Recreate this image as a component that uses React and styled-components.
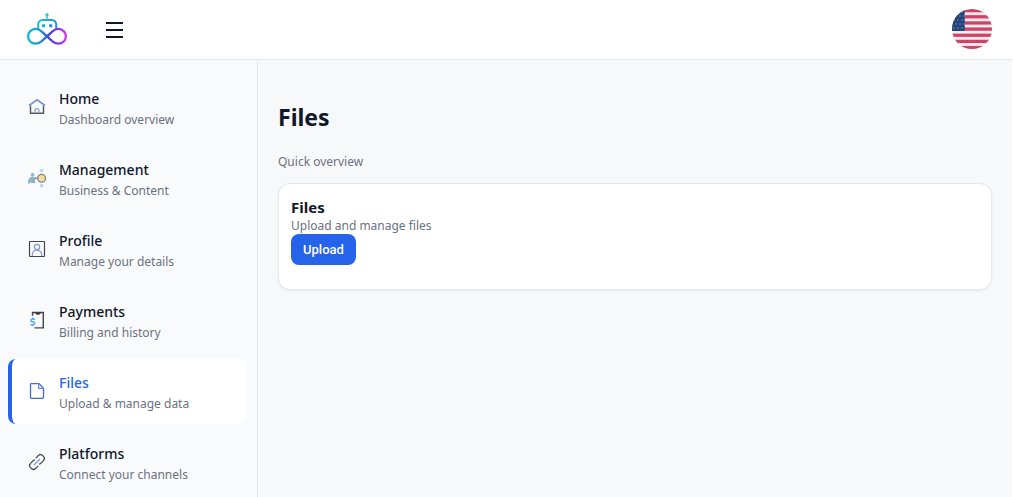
import React from "react";
import styled, { createGlobalStyle, css } from "styled-components";

const GlobalStyle = createGlobalStyle`
  *, *::before, *::after { box-sizing: border-box; }
  body {
    margin: 0;
    padding-right: 1px;
    background: #ffffff;
    color: #0f172a;
    font-family: "Segoe UI", "Noto Sans", sans-serif;
  }
  h1, h2, p { margin: 0; }
`;

const Page = styled.div`
  display: flex;
  flex-direction: column;
  height: 100vh;
  overflow: hidden;
  background: #f7f8fa;
`;

const Header = styled.header`
  display: flex;
  flex: none;
  align-items: center;
  height: 60px;
  padding: 0 20px 2px 24px;
  background: #ffffff;
  border-bottom: 1px solid #e5e7eb;
`;

const LogoLink = styled.a`
  display: flex;
`;

const MenuButton = styled.button`
  display: flex;
  margin: 4px auto 0 28px;
  padding: 4px;
  border: 0;
  background: transparent;
  color: #0f172a;
`;

const LanguageButton = styled.button`
  display: flex;
  padding: 0;
  border: 0;
  border-radius: 50%;
  background: transparent;
`;

const Body = styled.div`
  display: flex;
  flex: 1;
  min-height: 0;
`;

const Sidebar = styled.nav`
  display: flex;
  flex: none;
  flex-direction: column;
  gap: 6px;
  width: 258px;
  padding: 15px 10px 15px 8px;
  overflow: hidden;
  background: #f9fafc;
  border-right: 1px solid #e5e7eb;
`;

const NavItem = styled.a`
  display: flex;
  flex: none;
  align-items: flex-start;
  gap: 12px;
  padding: 13px 15px 10px;
  border-left: 4px solid transparent;
  border-radius: 8px;
  color: #0f172a;
  text-decoration: none;
  ${({ $active }) =>
    $active &&
    css`
      border-left-color: #2563eb;
      background: #ffffff;
      color: #2563eb;
    `}
`;

const NavIcon = styled.svg`
  flex: none;
  width: 20px;
  height: 20px;
  margin-top: 9px;
  fill: none;
`;

const NavTitle = styled.span`
  display: block;
  font-size: 14px;
  font-weight: 500;
  line-height: 22px;
`;

const Muted = styled.span`
  display: block;
  color: #6b7280;
  font-size: 12px;
  line-height: 20px;
`;

const Main = styled.main`
  flex: 1;
  min-width: 0;
  padding: 40px 20px;
`;

const PageTitle = styled.h1`
  margin-bottom: 18px;
  font-size: 23px;
  font-weight: 700;
  line-height: 34px;
`;

const Card = styled.section`
  display: flex;
  flex-direction: column;
  align-items: flex-start;
  margin-top: 11px;
  padding: 12px 12px 24px;
  background: #ffffff;
  border: 1px solid #e5e7eb;
  border-radius: 12px;
  box-shadow: 0 1px 3px rgba(0, 0, 0, 0.06);
`;

const CardTitle = styled.h2`
  font-size: 15px;
  font-weight: 700;
  line-height: 22px;
`;

const CardText = styled.p`
  color: #6b7280;
  font-size: 12px;
  line-height: 16px;
`;

const UploadButton = styled.button`
  padding: 8px 12px;
  border: 0;
  border-radius: 8px;
  background: #2563eb;
  color: #ffffff;
  font: 500 13px/15px Roboto, sans-serif;
`;

const Logo = () => (
  <svg width="46" height="38" viewBox="0 0 46 38" fill="none" aria-hidden="true">
    <defs>
      <linearGradient id="loop" x1="3" y1="0" x2="43" y2="0" gradientUnits="userSpaceOnUse">
        <stop offset="0" stopColor="#10c0cc" />
        <stop offset="0.35" stopColor="#1595d4" />
        <stop offset="0.55" stopColor="#3f46dc" />
        <stop offset="0.8" stopColor="#9a35e4" />
        <stop offset="1" stopColor="#d43cf0" />
      </linearGradient>
      <linearGradient id="head" x1="13" y1="0" x2="34" y2="0" gradientUnits="userSpaceOnUse">
        <stop offset="0" stopColor="#16c4cc" />
        <stop offset="1" stopColor="#1d8fd6" />
      </linearGradient>
    </defs>
    <path d="M14.200 19v-4.500a4.500 4.500 0 0 1 4.500-4.500h9a4.500 4.500 0 0 1 4.500 4.500V19" stroke="url(#head)" strokeWidth="2" />
    <path d="M23 10V5" stroke="#20c8d0" strokeWidth="1.400" />
    <circle cx="23" cy="4.800" r="1.700" fill="#2ad0d4" />
    <circle cx="19.500" cy="15.800" r="1.800" fill="#13b5cf" />
    <circle cx="26.700" cy="15.800" r="1.800" fill="#1a9ad6" />
    <path d="M23 26.300 17.500 21.300C15.700 19.700 13.800 18.900 11.500 18.900a7.400 7.400 0 0 0 0 14.800c2.300 0 4.200-.8 6-2.400L28.500 21.300C30.300 19.700 32.200 18.900 34.500 18.900a7.400 7.400 0 0 1 0 14.800c-2.300 0-4.200-.8-6-2.400Z" stroke="url(#loop)" strokeWidth="2.300" />
  </svg>
);

const MenuGlyph = () => (
  <svg width="24" height="24" viewBox="0 0 24 24" aria-hidden="true">
    <path d="M4 4h17M4 11h17M4 18h17" stroke="currentColor" strokeWidth="1.800" />
  </svg>
);

const stripes = [0, 1, 2, 3, 4, 5, 6];
const stars = [0, 1, 2, 3, 4];

const Flag = () => (
  <svg width="40" height="40" viewBox="0 0 40 40" aria-hidden="true">
    <defs>
      <clipPath id="disc"><circle cx="20" cy="20" r="20" /></clipPath>
    </defs>
    <g clipPath="url(#disc)">
      <rect width="40" height="40" fill="#f8eaef" />
      {stripes.map((n) => (
        <rect key={n} y={n * 6.15} width="40" height="3.300" fill="#cd4467" />
      ))}
      <rect width="12.700" height="22" fill="#22457c" />
      {stars.map((r) =>
        [0, 1, 2].map((c) => (
          <circle key={`${r}-${c}`} cx={2 + c * 4 + (r % 2) * 2} cy={3 + r * 4} r="0.700" fill="#8ba3c4" />
        ))
      )}
    </g>
  </svg>
);

const HomeIcon = () => (
  <NavIcon viewBox="0 0 20 20" aria-hidden="true">
    <path d="M3.500 8.500v7.800h13V8.500" stroke="#55555c" strokeWidth="1.400" />
    <path d="M2 8.500 10 2.900l8 5.600" stroke="#7b93c9" strokeWidth="1.700" />
    <path d="M8 16v-2.300a2 2 0 0 1 4 0V16" stroke="#8aa2da" strokeWidth="1.300" />
  </NavIcon>
);

const ManagementIcon = () => (
  <NavIcon viewBox="0 0 20 20" aria-hidden="true">
    <circle cx="14.600" cy="2.600" r="1.900" fill="#b9dbf6" />
    <circle cx="14.600" cy="17.600" r="1.900" fill="#b9dbf6" />
    <circle cx="5.600" cy="6.800" r="1.900" fill="#8db3cf" />
    <path d="M1 15.500c0-4 1-6.500 4-6.500h1.500L8 10.500V15H4v-2l-1 2.500Z" fill="#8db3cf" />
    <path d="M7 10.300h4" stroke="#7896ad" strokeWidth="1.600" />
    <circle cx="14.600" cy="10.200" r="3.900" fill="#f5dda0" stroke="#7d8588" strokeWidth="1.300" />
  </NavIcon>
);

const ProfileIcon = () => (
  <NavIcon viewBox="0 0 20 20" aria-hidden="true">
    <rect x="2.500" y="2.500" width="15" height="15" rx="0.500" stroke="#45454b" strokeWidth="1.200" />
    <circle cx="10" cy="8" r="2.700" stroke="#8298d4" strokeWidth="1.200" />
    <path d="M5.300 17v-1.500c0-2.500 2-4.300 4.700-4.300s4.700 1.800 4.700 4.300V17" stroke="#8298d4" strokeWidth="1.200" />
  </NavIcon>
);

const PaymentsIcon = () => (
  <NavIcon viewBox="0 0 20 20" aria-hidden="true">
    <path d="M5.500 5.800V2.500h10.800v15.400H7.500" stroke="#444448" strokeWidth="1.400" />
    <path d="M8.500 2h5v1.500l-1.200 1.300H9.700L8.500 3.500Z" fill="#3d3d42" />
    <path d="M8 9.200H5.300c-2 0-2 2.500 0 2.600l1 .1c2 .2 1.800 2.900-.2 2.900H3.300M5.700 7.600v1.600M5.700 14.800v1.400" stroke="#62aef2" strokeWidth="1.600" />
  </NavIcon>
);

const FilesIcon = () => (
  <NavIcon viewBox="0 0 20 20" aria-hidden="true">
    <path d="M12 2.600H4.300a.8.800 0 0 0-.8.800v13.200c0 .5.300.8.800.800h11.400c.5 0 .8-.3.800-.8V7.200L12 2.600Z" stroke="#4169e1" strokeWidth="1.300" />
    <path d="M11.600 2.800v4.600h4.700" stroke="#6d8ee8" strokeWidth="1.200" />
  </NavIcon>
);

const PlatformsIcon = () => (
  <NavIcon viewBox="0 0 20 20" aria-hidden="true">
    <path d="m8.800 6.100 2.600-2.600a3 3 0 0 1 4.200 0l.9.900a3 3 0 0 1 0 4.200l-2.600 2.600a3 3 0 0 1-2 .9M11.200 13.900l-2.600 2.600a3 3 0 0 1-4.200 0l-.9-.9a3 3 0 0 1 0-4.200l2.600-2.600a3 3 0 0 1 2-.9" stroke="#505057" strokeWidth="1.300" />
    <path d="m7 13 6-6" stroke="#7d99dc" strokeWidth="1.200" />
  </NavIcon>
);

const items = [
  { title: "Home", text: "Dashboard overview", Icon: HomeIcon },
  { title: "Management", text: "Business & Content", Icon: ManagementIcon },
  { title: "Profile", text: "Manage your details", Icon: ProfileIcon },
  { title: "Payments", text: "Billing and history", Icon: PaymentsIcon },
  { title: "Files", text: "Upload & manage data", Icon: FilesIcon, active: true },
  { title: "Platforms", text: "Connect your channels", Icon: PlatformsIcon },
];

export default function App() {
  return (
    <Page>
      <GlobalStyle />
      <Header>
        <LogoLink href="#home" aria-label="Home">
          <Logo />
        </LogoLink>
        <MenuButton type="button" aria-label="Toggle menu">
          <MenuGlyph />
        </MenuButton>
        <LanguageButton type="button" aria-label="Language: English">
          <Flag />
        </LanguageButton>
      </Header>
      <Body>
        <Sidebar aria-label="Main">
          {items.map(({ title, text, Icon, active }) => (
            <NavItem
              key={title}
              href={`#${title.toLowerCase()}`}
              $active={active}
              aria-current={active ? "page" : undefined}
            >
              <Icon />
              <span>
                <NavTitle>{title}</NavTitle>
                <Muted>{text}</Muted>
              </span>
            </NavItem>
          ))}
        </Sidebar>
        <Main>
          <PageTitle>Files</PageTitle>
          <Muted>Quick overview</Muted>
          <Card>
            <CardTitle>Files</CardTitle>
            <CardText>Upload and manage files</CardText>
            <UploadButton type="button">Upload</UploadButton>
          </Card>
        </Main>
      </Body>
    </Page>
  );
}
